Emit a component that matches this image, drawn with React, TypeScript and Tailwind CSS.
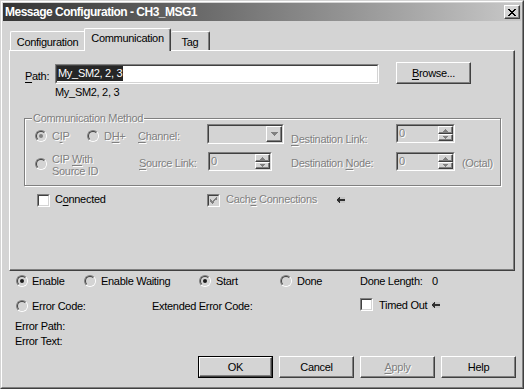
import type { ReactNode } from "react";

const DIS = "text-[#808080] [text-shadow:1px_1px_0_#ffffff]";
const RAISED =
  "border border-t-white border-l-white border-r-[#404040] border-b-[#404040] shadow-[inset_-1px_-1px_0_#808080]";
const SUNKEN = "border border-t-[#808080] border-l-[#808080] border-r-white border-b-white";
const SUNKEN_IN = "border border-t-[#404040] border-l-[#404040] border-r-[#d4d4d4] border-b-[#d4d4d4]";

function U({ children }: { children: ReactNode }) {
  return <u className="decoration-1 underline-offset-[2px]">{children}</u>;
}

function Radio({ dot, disabled }: { dot?: boolean; disabled?: boolean }) {
  return (
    <span className="block h-[12px] w-[12px] shrink-0 rounded-full border border-t-[#808080] border-l-[#808080] border-r-white border-b-white">
      <span className="flex h-full w-full items-center justify-center rounded-full border border-t-[#404040] border-l-[#404040] border-r-[#d4d4d4] border-b-[#d4d4d4] bg-[#d4d4d4]">
        {dot ? (
          <span className={`block h-[4px] w-[4px] rounded-full ${disabled ? "bg-[#808080]" : "bg-[#1c1c1c]"}`} />
        ) : null}
      </span>
    </span>
  );
}

function Check({ checked, disabled }: { checked?: boolean; disabled?: boolean }) {
  return (
    <span className={`block h-[13px] w-[13px] shrink-0 ${SUNKEN}`}>
      <span className={`flex h-full w-full items-center justify-center ${SUNKEN_IN} ${disabled ? "bg-[#d4d4d4]" : "bg-white"}`}>
        {checked ? (
          <svg width="7" height="7" viewBox="0 0 7 7" shapeRendering="crispEdges">
            <path d="M0 2h1v1h-1zM0 3h2v1h-2zM0 4h3v1h-3zM1 5h3v1h-3zM2 6h1v1h-1zM3 4h1v1h-1zM4 3h1v1h-1zM5 2h1v1h-1zM6 0h1v3h-1zM5 1h1v1h-1zM4 2h1v1h-1zM3 3h1v1h-1z" fill="#808080" />
          </svg>
        ) : null}
      </span>
    </span>
  );
}

function Tri({ down }: { down?: boolean }) {
  return (
    <svg width="5" height="3" viewBox="0 0 5 3" shapeRendering="crispEdges">
      <path d={down ? "M0 0h5v1h-5zM1 1h3v1h-3zM2 2h1v1h-1z" : "M2 0h1v1h-1zM1 1h3v1h-3zM0 2h5v1h-5z"} fill="#808080" />
    </svg>
  );
}

function Spin({ wide }: { wide?: boolean }) {
  return (
    <div className={`h-[19px] shrink-0 ${wide ? "w-[64px]" : "w-[59px]"} ${SUNKEN}`}>
      <div className={`flex h-full ${SUNKEN_IN} bg-[#d4d4d4]`}>
        <span className={`flex-1 pl-[1px] leading-[14px] ${DIS}`}>0</span>
        <div className="flex w-[15px] flex-col">
          <span className={`flex h-[8px] items-center justify-center bg-[#d4d4d4] ${RAISED}`}>
            <Tri />
          </span>
          <span className={`flex h-[7px] items-center justify-center bg-[#d4d4d4] ${RAISED}`}>
            <Tri down />
          </span>
        </div>
      </div>
    </div>
  );
}

function Combo() {
  return (
    <div className={`h-[20px] w-[77px] shrink-0 ${SUNKEN}`}>
      <div className={`flex h-full justify-end ${SUNKEN_IN} bg-[#d4d4d4]`}>
        <span className={`flex h-full w-[16px] items-center justify-center bg-[#d4d4d4] ${RAISED}`}>
          <svg width="7" height="4" viewBox="0 0 7 4" shapeRendering="crispEdges">
            <path d="M0 0h7v1h-7zM1 1h5v1h-5zM2 2h3v1h-3zM3 3h1v1h-1z" fill="#808080" />
          </svg>
        </span>
      </div>
    </div>
  );
}

function Arrow() {
  return (
    <svg width="8" height="6" viewBox="0 0 8 6" shapeRendering="crispEdges" className="shrink-0">
      <rect width="8" height="6" fill="#c6c6c6" />
      <path d="M2 0h1v1h-1zM1 1h2v1h-2zM0 2h8v2h-8zM1 4h2v1h-2zM2 5h1v1h-1z" fill="#303030" />
    </svg>
  );
}

function Button({ children, isDefault, disabled }: { children: ReactNode; isDefault?: boolean; disabled?: boolean }) {
  const inner = (
    <div className={`flex h-full w-full items-center justify-center bg-[#d4d4d4] ${RAISED} ${disabled ? DIS : "text-black"}`}>
      {children}
    </div>
  );
  if (isDefault) {
    return <div className="h-[22px] w-[75px] border border-black">{inner}</div>;
  }
  return <div className="h-[22px] w-[75px]">{inner}</div>;
}

export default function App() {
  return (
    <div className="h-[389px] w-[524px] border border-t-[#d4d4d4] border-l-[#d4d4d4] border-r-[#404040] border-b-[#404040] bg-[#d4d4d4] font-['Liberation_Sans',Arial,sans-serif] text-[11px] leading-[13px] tracking-[-0.3px] text-black">
      <div className="flex h-full flex-col border border-t-white border-l-white border-r-[#808080] border-b-[#808080] p-px">
        {/* title bar */}
        <div className="flex h-[18px] shrink-0 items-center justify-between bg-gradient-to-r from-[#343434] via-[#7c7c7c] to-[#c8c8c8] pl-[2px] pr-[1px]">
          <span className="text-[12px] font-bold leading-[14px] tracking-[-0.5px] text-white">Message Configuration - CH3_MSG1</span>
          <span className={`flex h-[14px] w-[16px] items-center justify-center bg-[#d4d4d4] ${RAISED}`}>
            <svg width="8" height="7" viewBox="0 0 8 7" shapeRendering="crispEdges">
              <path d="M0 0h2v1h-2zM6 0h2v1h-2zM1 1h2v1h-2zM5 1h2v1h-2zM2 2h4v1h-4zM3 3h2v1h-2zM2 4h4v1h-4zM1 5h2v1h-2zM5 5h2v1h-2zM0 6h2v1h-2zM6 6h2v1h-2z" fill="#000" />
            </svg>
          </span>
        </div>

        {/* tabs */}
        <div className="relative z-10 ml-[7px] mt-[7px] flex h-[22px] items-end">
          <div className="flex h-[19px] w-[74px] justify-center rounded-tl-[2px] border-l border-t border-l-white border-t-white pt-[4px]">
            Configuration
          </div>
          <div className="-mb-px flex h-[23px] w-[87px] justify-center rounded-t-[2px] border-l border-r border-t border-l-white border-r-[#404040] border-t-white bg-[#d4d4d4] pt-[3px] shadow-[inset_-1px_0_0_#808080]">
            Communication
          </div>
          <div className="flex h-[19px] w-[39px] justify-center rounded-t-[2px] border-r border-t border-r-[#404040] border-t-white pt-[4px] shadow-[inset_-1px_0_0_#808080]">
            Tag
          </div>
        </div>

        {/* tab panel */}
        <div className={`ml-[6px] flex h-[221px] w-[506px] shrink-0 flex-col ${RAISED}`}>
          <div className="ml-[15px] mt-[11px] flex items-start">
            <span className="mt-[8px] w-[30px]">
              <U>P</U>ath:
            </span>
            <div className={`mt-[2px] h-[20px] w-[324px] ${SUNKEN}`}>
              <div className={`h-full ${SUNKEN_IN} bg-white`}>
                <span className="block w-fit bg-[#262626] px-px leading-[15px] text-white">My_SM2, 2, 3</span>
              </div>
            </div>
            <div className="ml-[17px]">
              <Button>
                <span>
                  <U>B</U>rowse...
                </span>
              </Button>
            </div>
          </div>
          <div className="ml-[45px] mt-[2px]">My_SM2, 2, 3</div>

          {/* communication method group */}
          <div className="relative ml-[14px] mt-[19px] h-[68px] w-[477px] border border-[#808080] shadow-[inset_1px_1px_0_#ffffff,1px_1px_0_#ffffff]">
            <span className={`absolute left-[7px] top-[-7px] bg-[#d4d4d4] px-px ${DIS}`}>Communication Method</span>
            <div className="mt-[5px] flex h-[28px] items-start pl-[10px]">
              <span className="mt-[6px]">
                <Radio dot disabled />
              </span>
              <span className={`ml-[5px] mt-[6px] w-[35px] ${DIS}`}>
                C<U>I</U>P
              </span>
              <span className="mt-[6px]">
                <Radio />
              </span>
              <span className={`ml-[5px] mt-[6px] w-[34px] ${DIS}`}>
                D<U>H</U>+
              </span>
              <span className={`mt-[6px] w-[69px] ${DIS}`}>
                <U>C</U>hannel:
              </span>
              <Combo />
              <span className={`ml-[7px] mt-[9px] w-[105px] ${DIS}`}>
                <U>D</U>estination Link:
              </span>
              <Spin />
            </div>
            <div className="flex h-[20px] items-start pl-[10px]">
              <span className="mt-[6px]">
                <Radio />
              </span>
              <span className={`ml-[5px] mt-[1px] w-[87px] leading-[12px] ${DIS}`}>
                CIP <U>W</U>ith
                <br />
                Source ID
              </span>
              <span className={`mt-[5px] w-[69px] ${DIS}`}>
                <U>S</U>ource Link:
              </span>
              <Spin wide />
              <span className={`ml-[19px] mt-[5px] w-[105px] ${DIS}`}>
                Destination <U>N</U>ode:
              </span>
              <Spin />
              <span className={`ml-[7px] mt-[5px] ${DIS}`}>(Octal)</span>
            </div>
          </div>

          <div className="ml-[27px] mt-[7px] flex items-start">
            <span className="mt-px">
              <Check />
            </span>
            <span className="ml-[5px] w-[152px]">
              C<U>o</U>nnected
            </span>
            <span className="mt-px">
              <Check checked disabled />
            </span>
            <span className={`ml-[6px] w-[111px] ${DIS}`}>
              Cach<U>e</U> Connections
            </span>
            <span className="mt-[4px]">
              <Arrow />
            </span>
          </div>
        </div>

        {/* status */}
        <div className="ml-[13px] mt-[4px] flex h-[13px] items-start">
          <Radio dot />
          <span className="ml-[4px] w-[52px]">Enable</span>
          <Radio />
          <span className="ml-[5px] w-[98px]">Enable Waiting</span>
          <Radio dot />
          <span className="ml-[5px] w-[64px]">Start</span>
          <Radio />
          <span className="ml-[5px] w-[63px]">Done</span>
          <span className="w-[72px]">Done Length:</span>
          <span>0</span>
        </div>
        <div className="ml-[13px] mt-[10px] flex h-[14px] items-start">
          <span className="mt-[2px]">
            <Radio />
          </span>
          <span className="ml-[4px] mt-[2px] w-[120px]">Error Code:</span>
          <span className="mt-[2px] w-[208px]">Extended Error Code:</span>
          <Check />
          <span className="ml-[6px] mt-px w-[53px]">Timed Out</span>
          <span className="mt-[4px]">
            <Arrow />
          </span>
        </div>
        <div className="ml-[12px] mt-[8px]">Error Path:</div>
        <div className="ml-[12px] mt-[2px]">Error Text:</div>

        <div className="mr-[5px] mt-[8px] flex justify-end gap-[6px]">
          <Button isDefault>OK</Button>
          <Button>Cancel</Button>
          <Button disabled>
            <span>
              <U>A</U>pply
            </span>
          </Button>
          <Button>Help</Button>
        </div>
      </div>
    </div>
  );
}
